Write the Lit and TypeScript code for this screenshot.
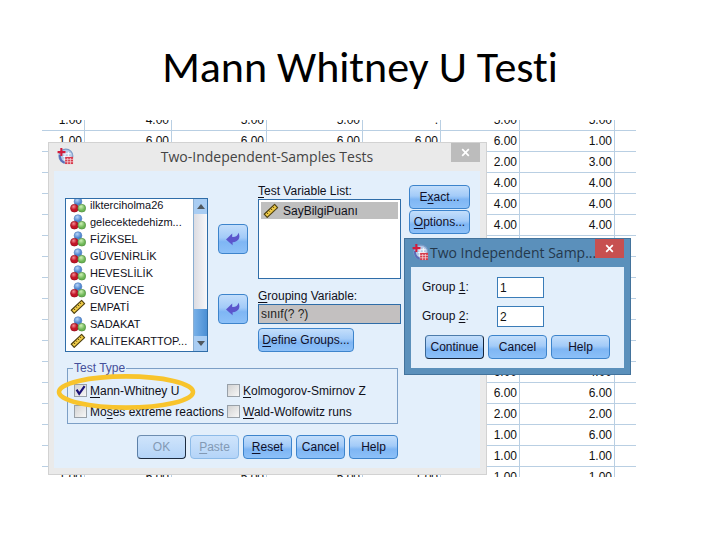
import { LitElement, html, css, nothing } from "lit";
import { customElement, property } from "lit/decorators.js";

const ROWS: string[][] = [
  ["1.00", "4.00", "5.00", "5.00", ".", "5.00", "5.00"],
  ["1.00", "6.00", "6.00", "6.00", "6.00", "6.00", "1.00"],
  ["", "", "", "", "", "2.00", "3.00"],
  ["", "", "", "", "", "4.00", "4.00"],
  ["", "", "", "", "", "4.00", "4.00"],
  ["", "", "", "", "", "4.00", "4.00"],
  ["", "", "", "", "", "", ""],
  ["", "", "", "", "", "", ""],
  ["", "", "", "", "", "", ""],
  ["", "", "", "", "", "", ""],
  ["", "", "", "", "", "", ""],
  ["", "", "", "", "", "", ""],
  ["", "", "", "", "", "6.00", "4.00"],
  ["", "", "", "", "", "6.00", "6.00"],
  ["", "", "", "", "", "2.00", "2.00"],
  ["", "", "", "", "", "1.00", "6.00"],
  ["", "", "", "", "", "1.00", "1.00"],
  ["1.00", "6.00", "5.00", "5.00", "1.00", "1.00", "1.00"],
];

const VARIABLES: { name: string; kind: "nominal" | "scale" }[] = [
  { name: "ilkterciholma26", kind: "nominal" },
  { name: "gelecektedehizm...", kind: "nominal" },
  { name: "FİZİKSEL", kind: "nominal" },
  { name: "GÜVENİRLİK", kind: "nominal" },
  { name: "HEVESLİLİK", kind: "nominal" },
  { name: "GÜVENCE", kind: "nominal" },
  { name: "EMPATİ", kind: "scale" },
  { name: "SADAKAT", kind: "nominal" },
  { name: "KALİTEKARTTOP...", kind: "scale" },
];

const nominalIcon = html`<svg class="icon" width="16" height="16" viewBox="0 0 16 16" aria-hidden="true">
  <defs>
    <radialGradient id="nb" cx=".4" cy=".3"><stop offset="0" stop-color="#b9d6f8" /><stop offset="1" stop-color="#4f86cf" /></radialGradient>
    <radialGradient id="nr" cx=".4" cy=".3"><stop offset="0" stop-color="#f28a90" /><stop offset=".8" stop-color="#c21426" /></radialGradient>
    <radialGradient id="ng" cx=".4" cy=".3"><stop offset="0" stop-color="#cdf0b4" /><stop offset="1" stop-color="#6db656" /></radialGradient>
  </defs>
  <circle cx="8" cy="4.6" r="3.9" fill="url(#nb)" stroke="#5280bd" stroke-width=".6" />
  <circle cx="4.4" cy="11.2" r="3.9" fill="url(#nr)" stroke="#8f1420" stroke-width=".6" />
  <circle cx="11.8" cy="11.2" r="3.9" fill="url(#ng)" stroke="#4f8a40" stroke-width=".6" />
</svg>`;

const scaleIcon = html`<svg class="icon" width="16" height="16" viewBox="0 0 16 16" aria-hidden="true">
  <path d="M1.2 11.2 11.6 1.4 14.6 4.6 4.2 14.4Z" fill="#f0cc48" stroke="#4f4110" stroke-width="1.2" stroke-linejoin="round" />
  <path d="M3.6 9.4l1.5 1.6M5.7 7.4l1.2 1.3M7.7 5.5l1.5 1.6M9.8 3.6l1.2 1.3" stroke="#4f4110" stroke-width="1" />
</svg>`;

const arrowIcon = html`<svg width="16" height="14" viewBox="0 0 16 14" aria-hidden="true">
  <path d="M1 7.4 7.2 1.6V5C10.8 5.2 12.6 4 13.4 .8 16 5.6 13.4 10 7.6 10.2V13.2Z" fill="#5b55cc" />
</svg>`;

const appIcon = html`<svg width="17" height="17" viewBox="0 0 18 18" aria-hidden="true">
  <circle cx="9.4" cy="8.6" r="7.4" fill="#b4c9e6" stroke="#7c9cc8" stroke-width="1.2" />
  <path d="M6.5 6h8M6.5 9h8M7 12h7M8.5 4v10M12 4v10" stroke="#f7faff" stroke-width="1.1" />
  <path d="M3 7.5C3 12 5 14.6 8 15.6" stroke="#5b6cb8" stroke-width="2" fill="none" />
  <path d="M4.6 0v8.6M.6 4.4h8.4" stroke="#d21c3c" stroke-width="2.2" />
  <rect x="8.6" y="9.4" width="8.4" height="7.6" fill="#d63a4c" />
  <path d="M8.6 12h8.4M8.6 14.6h8.4M11.3 10.6v6.4M14.2 10.6v6.4" stroke="#f6d4da" stroke-width=".8" />
</svg>`;

const closeIcon = html`<svg width="9" height="9" viewBox="0 0 9 9" aria-hidden="true">
  <path d="M1.2 1.2 7.8 7.8M7.8 1.2 1.2 7.8" stroke="#fff" stroke-width="1.7" />
</svg>`;

const buttonStyles = css`
  button {
    box-sizing: border-box;
    margin: 0;
    padding: 0;
    height: 24px;
    border: 1px solid #3d84cc;
    border-radius: 4px;
    background: linear-gradient(#c3defb, #a3cbf8 45%, #7fb6f4 60%, #8cc0f8);
    font: 12px/14px "Liberation Sans", Arial, sans-serif;
    color: #10102a;
    white-space: nowrap;
  }
  u {
    text-underline-offset: 2px;
  }
`;

@customElement("data-grid")
export class DataGrid extends LitElement {
  static styles = css`
    :host {
      display: block;
      overflow: hidden;
      height: 357px;
      font: 12px/14px "Liberation Sans", Arial, sans-serif;
      color: #111;
    }
    .grid {
      width: 100%;
      table-layout: fixed;
      border-collapse: separate;
      border-spacing: 0;
      margin-top: -10px;
    }
    .cell {
      box-sizing: border-box;
      height: 21px;
      padding: 0 2px 0 0;
      text-align: right;
      border-right: 1px solid #b9cfe3;
      border-bottom: 1px solid #b9cfe3;
    }
    .cell:last-child {
      border-right: 0;
    }
    .w43 { width: 43px; }
    .w78 { width: 78px; }
    .w79 { width: 79px; }
    .w87 { width: 87px; }
    .w95 { width: 95px; }
    .w96 { width: 96px; }
  `;

  render() {
    return html`<table class="grid">
      <colgroup>
        <col class="w43" /><col class="w87" /><col class="w95" /><col class="w96" />
        <col class="w78" /><col class="w79" /><col class="w95" /><col />
      </colgroup>
      <tbody>
        ${ROWS.map((r) => html`<tr>${r.map((v) => html`<td class="cell">${v}</td>`)}<td class="cell"></td></tr>`)}
      </tbody>
    </table>`;
  }
}

@customElement("dialog-window")
export class DialogWindow extends LitElement {
  @property() heading = "";
  @property({ type: Boolean, reflect: true }) active = false;

  static styles = css`
    :host {
      display: block;
      box-sizing: border-box;
      padding: 0 6px 6px 5px;
      border: 1px solid #d2d2d2;
      background: #eaeaea;
      color: #444;
    }
    :host([active]) {
      padding-left: 6px;
      border-color: #43739c;
      background: #5b90bb;
      color: #24384c;
    }
    .bar {
      display: grid;
      grid-template-columns: 29px minmax(0, 1fr) 29px;
      height: 28px;
    }
    .logo {
      padding: 5px 0 0 3px;
    }
    .heading {
      margin: 0;
      font: 14px/28px "Open Sans", "Noto Sans", sans-serif;
      text-align: center;
      white-space: nowrap;
    }
    :host([active]) .bar {
      grid-template-columns: 19px minmax(0, 1fr) 29px;
    }
    :host([active]) .logo {
      padding-left: 1px;
    }
    :host([active]) .heading {
      text-align: left;
    }
    .close {
      display: grid;
      place-items: center;
      width: 29px;
      height: 19px;
      padding: 0;
      border: 0;
      background: #bcbcbc;
    }
    :host([active]) .close {
      background: #c75050;
    }
    .client {
      background: #e3effb;
      color: #10101a;
    }
  `;

  render() {
    return html`<div class="bar">
        <span class="logo">${appIcon}</span>
        <h2 class="heading">${this.heading}</h2>
        <button class="close" aria-label="Close">${closeIcon}</button>
      </div>
      <div class="client"><slot></slot></div>`;
  }
}

@customElement("samples-form")
export class SamplesForm extends LitElement {
  static styles = [
    buttonStyles,
    css`
      :host {
        display: block;
        padding: 14px 10px 9px 11px;
        font: 12px/14px "Liberation Sans", Arial, sans-serif;
      }
      .main {
        display: grid;
        grid-template-columns: 143px 30px 143px 61px;
        column-gap: 10px;
      }
      .box {
        box-sizing: border-box;
        border: 1px solid #2f6da8;
        background: #fff;
      }
      .variables {
        display: flex;
        height: 154px;
        margin-top: 13px;
        overflow: hidden;
      }
      .items {
        flex: 1;
        display: flex;
        flex-direction: column;
        justify-content: flex-end;
        margin: 0;
        padding: 0 0 2px 4px;
        list-style: none;
        font-size: 11px;
        white-space: nowrap;
      }
      .item {
        display: flex;
        align-items: center;
        gap: 4px;
        flex: none;
        height: 17px;
      }
      .icon {
        flex: none;
      }
      .scroll {
        display: flex;
        flex-direction: column;
        width: 13px;
        border-left: 1px solid #8aaed2;
        background: linear-gradient(90deg, #dcdce2, #f8f8fa);
      }
      .step {
        display: grid;
        place-items: center;
        height: 15px;
        background: #a9cdf3;
      }
      .thumb {
        height: 27px;
        margin-top: auto;
        background: linear-gradient(90deg, #77b0e8, #4b8fd4);
      }
      .moves {
        display: flex;
        flex-direction: column;
        gap: 40px;
        padding-top: 39px;
      }
      .move {
        display: grid;
        place-items: center;
        height: 30px;
      }
      .targets {
        display: flex;
        flex-direction: column;
      }
      .label {
        padding-bottom: 2px;
        line-height: 12px;
      }
      .list {
        height: 80px;
        padding: 2px;
        margin-bottom: 11px;
      }
      .chosen {
        display: flex;
        align-items: center;
        gap: 4px;
        height: 17px;
        padding-left: 2px;
        background: #bfbfbf;
      }
      .field {
        width: 100%;
        height: 20px;
        margin: 0 0 4px;
        padding: 0 2px;
        background: #c3c0c0;
        border: 1px solid #2f6da8;
        box-sizing: border-box;
        font: 12px/14px "Liberation Sans", Arial, sans-serif;
        color: #222;
      }
      .define {
        align-self: flex-start;
        width: 96px;
      }
      .side {
        display: flex;
        flex-direction: column;
        gap: 1px;
        margin-left: -2px;
        width: 61px;
      }
      .tests {
        display: grid;
        grid-template-columns: 153px 1fr;
        width: 331px;
        box-sizing: border-box;
        margin: 9px 0 0 2px;
        padding: 5px 0 1px 6px;
        border: 1px solid #7c9fc6;
      }
      .caption {
        padding: 0 1px;
        margin-left: -1px;
        color: #45509a;
      }
      .option {
        display: grid;
        grid-template-columns: 13px auto;
        column-gap: 3px;
        align-items: center;
        justify-content: start;
        height: 21px;
        white-space: nowrap;
      }
      .tick {
        grid-area: 1 / 1;
        appearance: none;
        box-sizing: border-box;
        width: 13px;
        height: 13px;
        margin: 0;
        border: 1px solid #98a0a8;
        background: linear-gradient(135deg, #d2d2d2, #f7f7f7);
      }
      .mark {
        grid-area: 1 / 1;
        z-index: 1;
      }
      .ring {
        position: absolute;
        left: 7px;
        top: 230px;
      }
      .actions {
        display: flex;
        justify-content: center;
        gap: 4px;
        margin-top: 11px;
      }
      .action {
        width: 49px;
      }
      .action:disabled {
        background: linear-gradient(#cfe4fb, #b4d4f8);
        border-color: #8dbbe8;
        color: #8299b4;
      }
      .default:disabled {
        border-color: #6d8db0 #1d2c40 #1d2c40 #5c80a8;
      }
    `,
  ];

  private option(label: unknown, checked = false) {
    return html`<label class="option">
      <input class="tick" type="checkbox" .checked=${checked} />
      ${checked
        ? html`<svg class="mark" width="13" height="13" viewBox="0 0 13 13" aria-hidden="true">
            <path d="M2.6 5.6 5.2 9.8 10.6 2.2" fill="none" stroke="#1a1278" stroke-width="2.2" />
          </svg>`
        : nothing}
      <span>${label}</span>
    </label>`;
  }

  render() {
    return html`<div class="main">
        <div class="box variables">
          <ul class="items" role="listbox" aria-label="Variables">
            ${VARIABLES.map(
              (v) => html`<li class="item" role="option">${v.kind === "scale" ? scaleIcon : nominalIcon}<span>${v.name}</span></li>`
            )}
          </ul>
          <div class="scroll">
            <span class="step"><svg width="8" height="5" viewBox="0 0 8 5"><path d="M0 5 4 0 8 5Z" fill="#50585f" /></svg></span>
            <span class="thumb"></span>
            <span class="step"><svg width="8" height="5" viewBox="0 0 8 5"><path d="M0 0H8L4 5Z" fill="#50585f" /></svg></span>
          </div>
        </div>
        <div class="moves">
          <button class="move" aria-label="Move to test list">${arrowIcon}</button>
          <button class="move" aria-label="Move to grouping">${arrowIcon}</button>
        </div>
        <div class="targets">
          <span class="label" id="tests-label"><u>T</u>est Variable List:</span>
          <div class="box list" role="listbox" aria-labelledby="tests-label">
            <div class="chosen" role="option">${scaleIcon}<span>SayBilgiPuanı</span></div>
          </div>
          <label class="label" for="grouping"><u>G</u>rouping Variable:</label>
          <input id="grouping" class="field" type="text" .value=${"sınıf(? ?)"} />
          <button class="define"><u>D</u>efine Groups...</button>
        </div>
        <div class="side">
          <button>E<u>x</u>act...</button>
          <button><u>O</u>ptions...</button>
        </div>
      </div>
      <fieldset class="tests">
        <legend class="caption">Test Type</legend>
        ${this.option(html`<u>M</u>ann-Whitney U`, true)}
        ${this.option(html`<u>K</u>olmogorov-Smirnov Z`)}
        ${this.option(html`Mo<u>s</u>es extreme reactions`)}
        ${this.option(html`<u>W</u>ald-Wolfowitz runs`)}
      </fieldset>
      <div class="actions">
        <button class="action default" disabled>OK</button>
        <button class="action" disabled><u>P</u>aste</button>
        <button class="action"><u>R</u>eset</button>
        <button class="action">Cancel</button>
        <button class="action">Help</button>
      </div>
      <svg class="ring" width="140" height="38" viewBox="0 0 140 38" aria-hidden="true">
        <ellipse cx="70" cy="19" rx="67" ry="15.6" fill="none" stroke="#f8c42c" stroke-width="4.6" />
      </svg>`;
  }
}

@customElement("groups-form")
export class GroupsForm extends LitElement {
  static styles = [
    buttonStyles,
    css`
      :host {
        display: block;
        padding: 10px 14px 9px;
        font: 12px/14px "Liberation Sans", Arial, sans-serif;
      }
      .row {
        display: grid;
        grid-template-columns: 75px 47px;
        margin: 0 0 8px -3px;
      }
      .value {
        box-sizing: border-box;
        width: 47px;
        height: 21px;
        padding: 1px 2px 0;
        border: 1px solid #3a7cb8;
        background: #fff;
        font: 12px/14px "Liberation Sans", Arial, sans-serif;
        color: #111;
      }
      .name {
        line-height: 20px;
      }
      .actions {
        display: grid;
        grid-template-columns: repeat(3, 1fr);
        gap: 4px;
      }
      .default {
        border-color: #4d7cab #14243a #14243a #3a6796;
      }
    `,
  ];

  render() {
    return html`<div class="row">
        <label class="name" for="g1">Group <u>1</u>:</label>
        <input class="value" id="g1" type="text" .value=${"1"} />
      </div>
      <div class="row">
        <label class="name" for="g2">Group <u>2</u>:</label>
        <input class="value" id="g2" type="text" .value=${"2"} />
      </div>
      <div class="actions">
        <button class="default">Continue</button>
        <button>Cancel</button>
        <button>Help</button>
      </div>`;
  }
}

@customElement("app-root")
export class AppRoot extends LitElement {
  static styles = css`
    :host {
      display: block;
      background: #fff;
    }
    .title {
      margin: 0;
      padding: 39px 0 25px;
      font: 400 44px/56px Carlito, Calibri, Lato, sans-serif;
      font-variant-ligatures: none;
      text-align: center;
      color: #000;
    }
    .desktop {
      position: relative;
      margin: 0 84px 60px 42px;
    }
    .samples {
      position: absolute;
      left: 6px;
      top: 22px;
      width: 439px;
    }
    .groups {
      position: absolute;
      left: 362px;
      top: 118px;
      width: 227px;
    }
  `;

  render() {
    return html`<h1 class="title">Mann Whitney U Testi</h1>
      <main class="desktop">
        <data-grid></data-grid>
        <dialog-window class="samples" heading="Two-Independent-Samples Tests"><samples-form></samples-form></dialog-window>
        <dialog-window class="groups" heading="Two Independent Samp..." active><groups-form></groups-form></dialog-window>
      </main>`;
  }
}
